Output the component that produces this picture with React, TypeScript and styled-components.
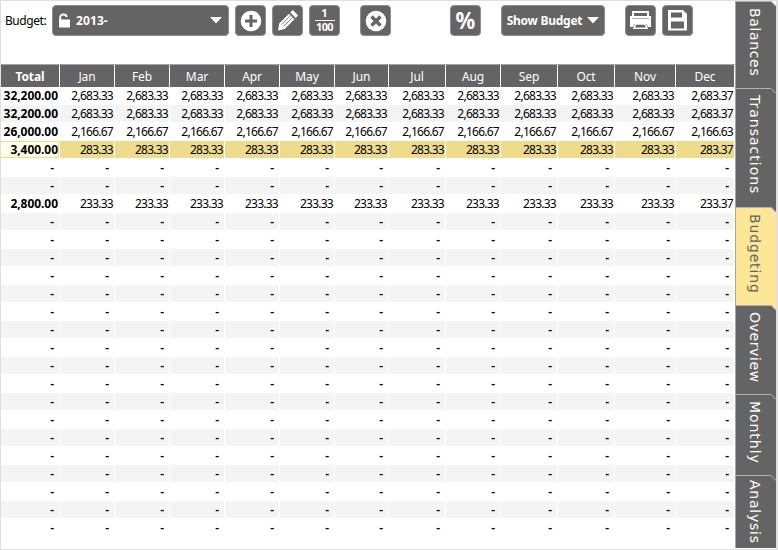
import React from "react";
import styled, { createGlobalStyle, css } from "styled-components";

const Global = createGlobalStyle`
  * { box-sizing: border-box; }
  body { margin: 0; background: #fff; overflow: hidden; }
`;

const Page = styled.div`
  width: 778px;
  height: 550px;
  display: flex;
  border: 1px solid #dfdfdf;
  background: #fff;
  font-family: "Noto Sans", "Open Sans", sans-serif;
  font-size: 12px;
  color: #000;
`;

const Main = styled.main`
  width: 734px;
  flex: none;
`;

const Toolbar = styled.div`
  height: 63px;
  padding: 4px 0 0 4px;
  display: flex;
  align-items: flex-start;
`;

const Label = styled.label`
  width: 47px;
  line-height: 31px;
  letter-spacing: -0.45px;
  white-space: nowrap;
`;

const Button = styled.button<{ $width?: number; $gap?: number }>`
  width: ${(p) => p.$width ?? 31}px;
  height: 31px;
  flex: none;
  margin: 0 0 0 ${(p) => p.$gap ?? 6}px;
  padding: 0;
  display: flex;
  align-items: center;
  justify-content: center;
  border: 1px solid #8f8f8f;
  border-radius: 4px;
  background: #646464;
  color: #fff;
  font: 700 12px "Noto Sans", sans-serif;
`;

const BudgetPicker = styled(Button)`
  justify-content: flex-start;
  padding: 0 6px 0 5px;
`;

const PickerText = styled.span`
  flex: 1;
  margin-left: 5px;
  text-align: left;
  letter-spacing: 0.1px;
`;

const MenuText = styled.span`
  margin-right: 5px;
  letter-spacing: -0.25px;
  white-space: nowrap;
`;

const Fraction = styled.span`
  display: flex;
  flex-direction: column;
  align-items: center;
  font-size: 11px;
`;

const Numerator = styled.span`
  height: 12px;
  line-height: 10px;
`;

const Denominator = styled.span`
  width: 20px;
  height: 13px;
  border-top: 1px solid #fff;
  line-height: 12px;
  text-align: center;
  letter-spacing: -0.7px;
`;

const Percent = styled.span`
  font: 700 23px/29px "Noto Sans", sans-serif;
  transform: scaleX(0.95);
`;

const columns = "58px 54px 54px 54px 54px 54px 53px 56px 54px 56px 56px 60px 58px";

const Line = styled.div`
  display: grid;
  grid-template-columns: ${columns};
  column-gap: 1px;
`;

const HeaderLine = styled(Line)`
  width: 734px;
  height: 23px;
  border-top: 1px solid #a6a6a6;
`;

const HeaderCell = styled.div<{ $bold?: boolean }>`
  background: #646464;
  color: #fff;
  text-align: center;
  line-height: 23px;
  letter-spacing: -0.1px;
  font-weight: ${(p) => (p.$bold ? 700 : 400)};
`;

const BodyLine = styled(Line)`
  height: 18px;
`;

type Tone = "plain" | "alt" | "selected";
const tones: Record<Tone, string> = { plain: "#fff", alt: "#f4f4f4", selected: "#eedc8c" };

const Cell = styled.div<{ $tone: Tone; $total?: boolean; $dash?: boolean }>`
  height: 17px;
  padding-right: ${(p) => (p.$dash ? 5 : 1)}px;
  line-height: 18px;
  text-align: right;
  letter-spacing: ${(p) => (p.$dash ? 0 : -0.74)}px;
  font-weight: ${(p) => (p.$dash ? 600 : 400)};
  background: ${(p) => tones[p.$tone]};
  ${(p) => p.$total && !p.$dash && css`
    padding-right: 1px;
    font-weight: 700;
    letter-spacing: -0.05px;
  `}
  ${(p) => p.$total && p.$tone === "selected" && css`
    background: #ffffe9;
    border: 1px solid #eedc8c;
    border-left: 0;
    padding-right: 0;
    line-height: 16px;
  `}
`;

const Tabs = styled.nav`
  width: 42px;
  flex: none;
  display: flex;
  flex-direction: column;
  padding-bottom: 1px;
  border-right: 1px solid #dfdfdf;
`;

const Tab = styled.div<{ $height: number; $active?: boolean; $top?: number }>`
  position: relative;
  width: 41px;
  height: ${(p) => p.$height}px;
  flex: none;
  padding: ${(p) => p.$top ?? 6}px 10px 0 0;
  display: flex;
  align-items: flex-start;
  justify-content: flex-end;
  background: ${(p) => (p.$active ? "#fbe795" : "#646464")};
  border-left: 1px solid #a6a6a6;
  color: ${(p) => (p.$active ? "#646464" : "#fff")};
`;

const TabText = styled.span<{ $spacing: number }>`
  writing-mode: vertical-rl;
  font: 14px/22px "DejaVu Sans", sans-serif;
  letter-spacing: ${(p) => p.$spacing}px;
  white-space: nowrap;
`;

const TabEdge = styled.svg`
  position: absolute;
  left: 0;
  top: 0;
`;

const Triangle = () => (
  <svg width="12" height="7" viewBox="0 0 12 7"><path d="M0 0h12L6 6.5z" fill="#fff" /></svg>
);

const months = ["Jan", "Feb", "Mar", "Apr", "May", "Jun", "Jul", "Aug", "Sep", "Oct", "Nov", "Dec"];

const amounts: Record<number, [string, string, string]> = {
  0: ["32,200.00", "2,683.33", "2,683.37"],
  1: ["32,200.00", "2,683.33", "2,683.37"],
  2: ["26,000.00", "2,166.67", "2,166.63"],
  3: ["3,400.00", "283.33", "283.37"],
  6: ["2,800.00", "233.33", "233.37"],
};

const tabs = [
  { name: "Balances", height: 87, spacing: 0.65, top: 7, above: "#fff" },
  { name: "Transactions", height: 119, spacing: 1, top: 7, above: "#646464" },
  { name: "Budgeting", height: 98, spacing: 0.85, top: 7, above: "#646464", active: true },
  { name: "Overview", height: 89, spacing: 0.6, top: 7, above: "#fbe795" },
  { name: "Monthly", height: 81, spacing: 0.95, top: 7, above: "#646464" },
  { name: "Analysis", height: 73, spacing: 0.75, top: 5, above: "#646464" },
];

export default function App() {
  return (
    <Page>
      <Global />
      <Main>
        <Toolbar>
          <Label>Budget:</Label>
          <BudgetPicker $width={177} $gap={0}>
            <svg width="13" height="15" viewBox="0 0 13 15">
              <path d="M2.2 7.5V5C1.6.8 7.8.2 8.8 4" fill="none" stroke="#fff" strokeWidth="2" />
              <path d="M1 6.5h11v8H1z" fill="#fff" />
            </svg>
            <PickerText>2013-</PickerText>
            <Triangle />
          </BudgetPicker>
          <Button>
            <svg width="22" height="22" viewBox="0 0 22 22">
              <circle cx="11" cy="11" r="10.3" fill="#fff" />
              <path d="M11 5v12M5 11h12" stroke="#646464" strokeWidth="3" />
            </svg>
          </Button>
          <Button>
            <svg width="23" height="23" viewBox="0 0 23 23">
              <path d="M2 21.5 3.2 14.5 13 4.7l5.5 5.5L8.7 20z M14.3 3.4 16.8.9 22.2 6.4l-2.5 2.5z" fill="#fff" />
              <path d="M5.6 15.6 14.8 6.4M7.5 17.5 16.7 8.3" stroke="#646464" strokeWidth=".8" />
            </svg>
          </Button>
          <Button><Fraction><Numerator>1</Numerator><Denominator>100</Denominator></Fraction></Button>
          <Button $gap={20}>
            <svg width="22" height="22" viewBox="0 0 22 22">
              <circle cx="11" cy="11" r="10.3" fill="#fff" />
              <path d="m6.5 6.5 9 9m0-9-9 9" stroke="#646464" strokeWidth="3.4" />
            </svg>
          </Button>
          <Button $gap={59}><Percent>%</Percent></Button>
          <Button $width={104} $gap={20}><MenuText>Show Budget</MenuText><Triangle /></Button>
          <Button $gap={20}>
            <svg width="23" height="21" viewBox="0 0 23 21">
              <path d="M4 2h15v5H4z" fill="#646464" stroke="#fff" strokeWidth="2" />
              <path d="M1 6h2v2.5h17V6h2v11H1z" fill="#fff" />
              <path d="M3.5 14h16v5h-16z" fill="#646464" />
              <path d="M1 13h5l-2 4H1zM17 13h5v4h-3z" fill="#fff" />
              <path d="M6.8 14h9.4l1.8 4.3H5z" fill="#646464" stroke="#fff" strokeWidth="1.6" />
            </svg>
          </Button>
          <Button>
            <svg width="21" height="23" viewBox="0 0 21 23">
              <path d="M1 1h15l4 4v16.5H1z" fill="#fff" />
              <path d="M4 3.5h11v5H4zM4 12.5h13v7H4z" fill="#646464" />
            </svg>
          </Button>
        </Toolbar>
        <HeaderLine>
          <HeaderCell $bold>Total</HeaderCell>
          {months.map((month) => <HeaderCell key={month}>{month}</HeaderCell>)}
        </HeaderLine>
        {Array.from({ length: 25 }, (_, row) => {
          const value = amounts[row];
          const tone: Tone = row === 3 ? "selected" : row % 2 ? "alt" : "plain";
          return (
            <BodyLine key={row}>
              <Cell $tone={tone} $total $dash={!value}>{value ? value[0] : "-"}</Cell>
              {months.map((month, i) => (
                <Cell key={month} $tone={tone} $dash={!value}>
                  {value ? value[i === 11 ? 2 : 1] : "-"}
                </Cell>
              ))}
            </BodyLine>
          );
        })}
      </Main>
      <Tabs>
        {tabs.map((tab) => (
          <Tab key={tab.name} $height={tab.height} $active={tab.active} $top={tab.top}>
            <TabEdge width="40" height="6" viewBox="0 0 40 6">
              <path d="M35 0h5v5z" fill={tab.above} />
              <path d="M0 .5h35l5 5" fill="none" stroke="#b0b0b0" />
            </TabEdge>
            <TabText $spacing={tab.spacing}>{tab.name}</TabText>
          </Tab>
        ))}
      </Tabs>
    </Page>
  );
}
